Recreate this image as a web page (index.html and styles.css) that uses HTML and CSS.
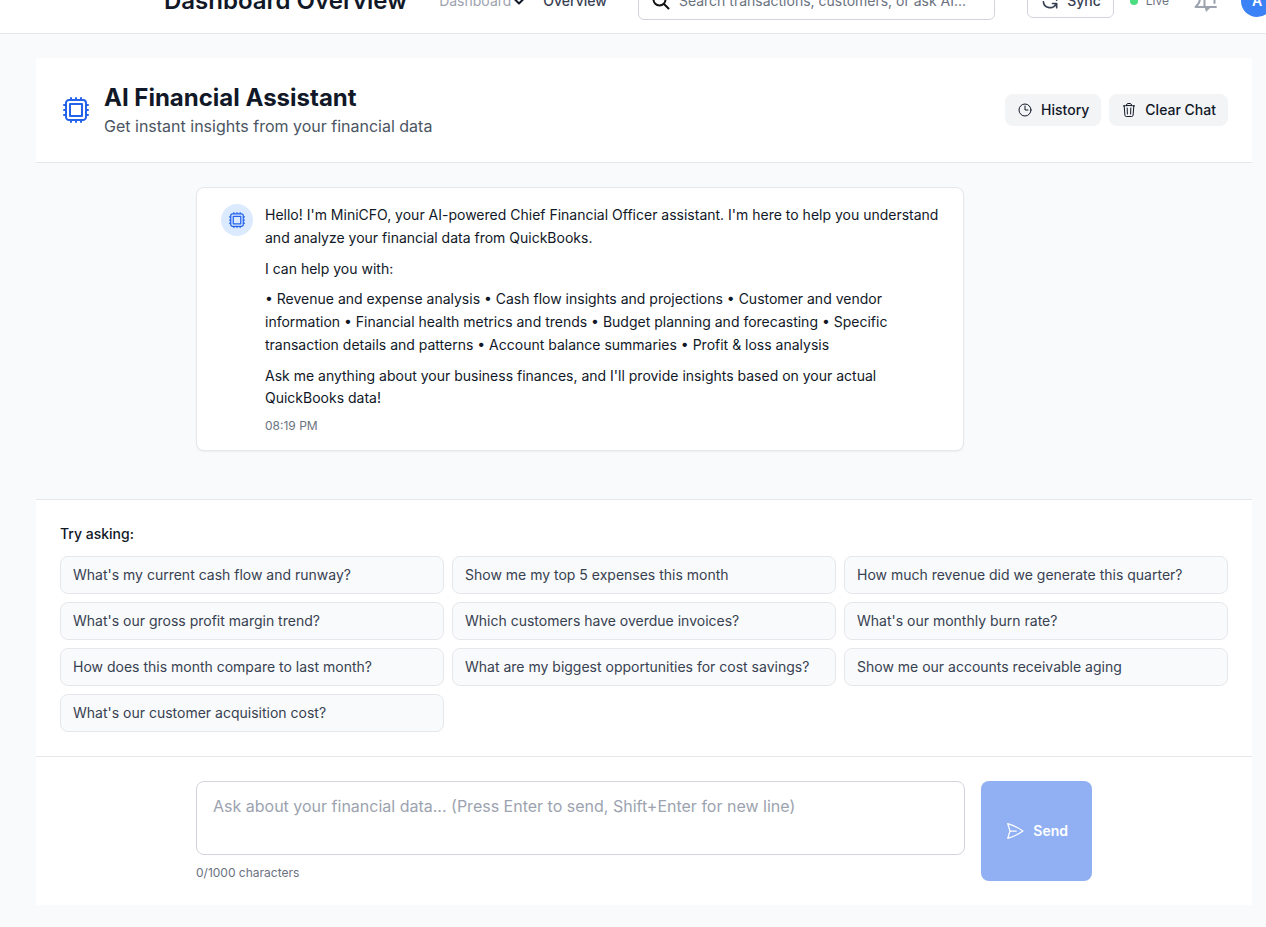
FILE: index.html
```html
<!DOCTYPE html>
<html lang="en">
<head>
<meta charset="utf-8">
<meta name="viewport" content="width=device-width, initial-scale=1">
<title>AI Financial Assistant</title>
<link rel="stylesheet" href="styles.css">
</head>
<body>
<svg class="sprite" aria-hidden="true">
  <symbol id="chip" viewBox="0 0 24 24"><path d="M8.25 3v1.5M4.5 8.25H3m18 0h-1.5M4.5 12H3m18 0h-1.5m-15 3.75H3m18 0h-1.5M8.25 19.5V21M12 3v1.5m0 15V21m3.75-18v1.500m0 15V21m-9-1.500h10.500a2.250 2.250 0 0 0 2.250-2.250V6.750a2.250 2.250 0 0 0-2.250-2.250H6.750A2.250 2.250 0 0 0 4.500 6.750v10.500a2.250 2.250 0 0 0 2.250 2.250Zm.75-12h9v9h-9v-9Z"/></symbol>
</svg>
<header class="topbar">
  <h2 class="topbar-title">Dashboard Overview</h2>
  <nav class="crumbs">
    <a class="crumb" href="#">Dashboard</a>
    <svg class="chevron" viewBox="0 0 12 12"><path d="M2 4.500 6 8.500l4-4"/></svg>
    <a class="crumb crumb-current" href="#">Overview</a>
  </nav>
  <label class="search">
    <svg class="icon-20 search-icon" viewBox="0 0 20 20"><circle cx="8.500" cy="8.500" r="6"/><path d="m13 13 4.500 4.500"/></svg>
    <input class="search-input" type="text" aria-label="Search" placeholder="Search transactions, customers, or ask AI...">
  </label>
  <button class="sync" type="button">
    <svg class="icon-20 sync-icon" viewBox="0 0 24 24"><path d="M4 4v5h.582m15.356 2A8.001 8.001 0 0 0 4.582 9m0 0H9m11 11v-5h-.581m0 0a8.003 8.003 0 0 1-15.357-2m15.357 2H15"/></svg>
    Sync
  </button>
  <span class="live">Live</span>
  <button class="bell" type="button" aria-label="Notifications">
    <svg class="icon-24 bell-icon" viewBox="0 0 24 24"><path d="M7 6v3c0 4-2 7-4.500 9H23M11.500 18V8c0-3 10-3 10 0v6"/><path class="bell-clapper" d="M12.500 18h5l-4 4z"/></svg>
  </button>
  <button class="avatar" type="button">A</button>
</header>

<main class="panel">
  <header class="panel-head">
    <svg class="icon-32 brand" viewBox="0 0 24 24"><use href="#chip"/></svg>
    <div class="heading">
      <h1 class="title">AI Financial Assistant</h1>
      <p class="subtitle">Get instant insights from your financial data</p>
    </div>
    <div class="actions">
      <button class="action" type="button">
        <svg class="icon-16" viewBox="0 0 24 24"><path d="M12 6v6h4.500m4.500 0a9 9 0 1 1-18 0 9 9 0 0 1 18 0Z"/></svg>
        History
      </button>
      <button class="action" type="button">
        <svg class="icon-16" viewBox="0 0 24 24"><path d="m14.740 9-.346 9m-4.788 0L9.260 9m9.968-3.210c.342.052.682.107 1.022.166m-1.022-.165L18.160 19.673a2.250 2.250 0 0 1-2.244 2.077H8.084a2.250 2.250 0 0 1-2.244-2.077L4.772 5.790m14.456 0a48.108 48.108 0 0 0-3.478-.397m-12 .562c.340-.059.680-.114 1.022-.165m0 0a48.110 48.110 0 0 1 3.478-.397m7.500 0v-.916c0-1.180-.910-2.164-2.090-2.201a51.964 51.964 0 0 0-3.320 0c-1.180.037-2.090 1.022-2.090 2.201v.916m7.500 0a48.667 48.667 0 0 0-7.500 0"/></svg>
        Clear Chat
      </button>
    </div>
  </header>

  <section class="chat">
    <div class="column">
      <article class="message">
        <span class="message-avatar"><svg class="icon-20" viewBox="0 0 24 24"><use href="#chip"/></svg></span>
        <div class="message-body">
          <p>Hello! I'm MiniCFO, your AI-powered Chief Financial Officer assistant. I'm here to help you understand and analyze your financial data from QuickBooks.</p>
          <p>I can help you with:</p>
          <p>• Revenue and expense analysis • Cash flow insights and projections • Customer and vendor information • Financial health metrics and trends • Budget planning and forecasting • Specific transaction details and patterns • Account balance summaries • Profit &amp; loss analysis</p>
          <p>Ask me anything about your business finances, and I'll provide insights based on your actual QuickBooks data!</p>
          <time class="stamp">08:19 PM</time>
        </div>
      </article>
    </div>
  </section>

  <section class="prompts">
    <h3 class="prompts-title">Try asking:</h3>
    <div class="prompt-grid">
      <button class="prompt" type="button">What's my current cash flow and runway?</button>
      <button class="prompt" type="button">Show me my top 5 expenses this month</button>
      <button class="prompt" type="button">How much revenue did we generate this quarter?</button>
      <button class="prompt" type="button">What's our gross profit margin trend?</button>
      <button class="prompt" type="button">Which customers have overdue invoices?</button>
      <button class="prompt" type="button">What's our monthly burn rate?</button>
      <button class="prompt" type="button">How does this month compare to last month?</button>
      <button class="prompt" type="button">What are my biggest opportunities for cost savings?</button>
      <button class="prompt" type="button">Show me our accounts receivable aging</button>
      <button class="prompt" type="button">What's our customer acquisition cost?</button>
    </div>
  </section>

  <form class="composer">
    <div class="column composer-row">
      <div class="field">
        <textarea class="field-input" rows="2" maxlength="1000" aria-label="Your question" placeholder="Ask about your financial data... (Press Enter to send, Shift+Enter for new line)"></textarea>
        <span class="counter">0/1000 characters</span>
      </div>
      <button class="send" type="submit" disabled>
        <svg class="icon-20" viewBox="0 0 24 24"><path d="M6 12 3.269 3.125A59.769 59.769 0 0 1 21.485 12 59.768 59.768 0 0 1 3.270 20.875L5.999 12Zm0 0h7.500"/></svg>
        Send
      </button>
    </div>
  </form>
</main>
</body>
</html>
```
FILE: styles.css
```css
* { box-sizing: border-box; margin: 0; }

body {
  background: #f9fafb;
  color: #111827;
  font-family: Inter, "Liberation Sans", sans-serif;
  font-size: 14px;
  line-height: 20px;
  overflow-x: hidden;
}

button, input, textarea { font: inherit; color: inherit; }
button { cursor: pointer; }
a { color: inherit; text-decoration: none; }

svg {
  flex: none;
  fill: none;
  stroke: currentColor;
  stroke-width: 1.5;
  stroke-linecap: round;
  stroke-linejoin: round;
}

.sprite { position: absolute; width: 0; height: 0; }
.icon-16 { width: 16px; height: 16px; }
.icon-20 { width: 20px; height: 20px; }
.icon-24 { width: 24px; height: 24px; }
.icon-32 { width: 32px; height: 32px; }

/* Top bar, scrolled partly out of view */
.topbar {
  display: flex;
  align-items: center;
  height: 65px;
  margin-top: -31px;
  padding-left: 164px;
  background: #fff;
  border-bottom: 1px solid #e5e7eb;
  overflow: hidden;
}

.topbar-title {
  font-size: 24px;
  line-height: 32px;
  font-weight: 600;
  white-space: nowrap;
}

.crumbs { display: flex; align-items: center; margin-left: 32px; }
.crumb { color: #9ca3af; }
.crumb-current { margin-left: 18px; color: #374151; font-weight: 500; }
.chevron { width: 12px; height: 12px; margin-left: 2px; color: #111827; stroke-width: 2; }

.search {
  display: flex;
  align-items: center;
  flex: 1 1 0;
  min-width: 0;
  height: 38px;
  margin-left: 31px;
  padding: 0 12px;
  gap: 8px;
  border: 1px solid #d1d5db;
  border-radius: 6px;
}
.search-icon { color: #111; stroke-width: 2; }
.search-input { flex: 1; min-width: 0; padding: 0; border: 0; outline: 0; background: none; }
.search-input::placeholder { color: #6b7280; }

.sync {
  display: flex;
  align-items: center;
  flex: none;
  gap: 7px;
  height: 34px;
  margin-left: 32px;
  padding: 0 12px;
  border: 1px solid #d1d5db;
  border-radius: 6px;
  background: #fff;
  color: #374151;
  font-weight: 500;
}
.sync-icon { stroke-width: 2; }

.live {
  display: flex;
  align-items: center;
  gap: 8px;
  margin-left: 16px;
  color: #6b7280;
  font-size: 12px;
}
.live::before {
  content: "";
  width: 8px;
  height: 8px;
  border-radius: 50%;
  background: #4ade80;
}

.bell {
  display: flex;
  margin-left: 24px;
  padding: 0;
  border: 0;
  background: none;
  color: #9ca3af;
}
.bell-icon { stroke-width: 2; }
.bell-clapper { fill: currentColor; stroke-width: 1; }
.avatar {
  flex: none;
  width: 32px;
  height: 32px;
  margin: 0 -7px 0 24px;
  padding: 0;
  border: 0;
  border-radius: 50%;
  background: #3b82f6;
  color: #fff;
  font-weight: 600;
}

/* Assistant panel */
.panel { margin: 24px 14px 24px 36px; }

.panel-head {
  display: flex;
  align-items: center;
  gap: 12px;
  padding: 24px;
  background: #fff;
  border-bottom: 1px solid #e5e7eb;
}
.brand { color: #2563eb; }
.heading { flex: 1; }
.title { font-size: 24px; line-height: 32px; font-weight: 700; }
.subtitle { color: #4b5563; font-size: 16px; line-height: 24px; }

.actions { display: flex; gap: 8px; }
.action {
  display: flex;
  align-items: center;
  gap: 8px;
  padding: 6px 12px;
  border: 0;
  border-radius: 8px;
  background: #f3f4f6;
  font-weight: 500;
}

.column { max-width: 896px; margin: 0 auto; }

.chat { padding: 24px 24px 48px; }
.message {
  display: flex;
  align-items: flex-start;
  gap: 12px;
  max-width: 768px;
  padding: 16px 24px;
  border: 1px solid #e5e7eb;
  border-radius: 8px;
  background: #fff;
  box-shadow: 0 1px 2px rgba(0, 0, 0, 0.05);
}
.message-avatar {
  display: flex;
  align-items: center;
  justify-content: center;
  flex: none;
  width: 32px;
  height: 32px;
  border-radius: 50%;
  background: #dbeafe;
  color: #2563eb;
}
.message-body { display: grid; gap: 8px; line-height: 1.625; }
.stamp { color: #6b7280; font-size: 12px; line-height: 16px; }

.prompts {
  padding: 24px;
  background: #fff;
  border-top: 1px solid #e5e7eb;
}
.prompts-title { margin-bottom: 12px; font-size: 14px; font-weight: 500; }
.prompt-grid { display: grid; grid-template-columns: repeat(3, 1fr); gap: 8px; }
.prompt {
  padding: 8px 12px;
  border: 1px solid #e5e7eb;
  border-radius: 8px;
  background: #f9fafb;
  color: #374151;
  text-align: left;
}

.composer {
  padding: 24px;
  background: #fff;
  border-top: 1px solid #e5e7eb;
}
.composer-row { display: flex; gap: 16px; }
.field { display: flex; flex: 1; flex-direction: column; gap: 10px; }
.field-input {
  display: block;
  width: 100%;
  padding: 12px 16px;
  border: 1px solid #d1d5db;
  border-radius: 8px;
  background: #fff;
  font-size: 16px;
  line-height: 24px;
  resize: none;
}
.field-input::placeholder { color: #9ca3af; }
.counter { color: #6b7280; font-size: 12px; line-height: 16px; }

.send {
  display: flex;
  align-items: center;
  gap: 8px;
  padding: 12px 24px;
  border: 0;
  border-radius: 8px;
  background: #2563eb;
  color: #fff;
  font-weight: 600;
  opacity: 0.5;
}
```
